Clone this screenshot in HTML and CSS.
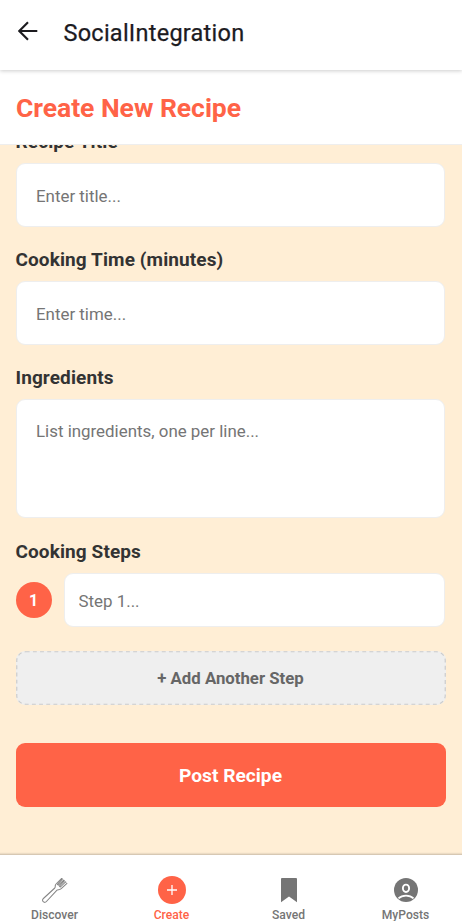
FILE: index.html
```html
<!DOCTYPE html>
<html lang="en">
<head>
<meta charset="utf-8">
<title>SocialIntegration</title>
<link rel="stylesheet" href="styles.css">
</head>
<body>
<div class="app">
  <header class="appbar">
    <svg class="back" viewBox="0 0 20 20" aria-hidden="true"><path d="M19.300 10H1.800M10 1.200 1.300 10l8.700 8.800"/></svg>
    <span class="appbar-title">SocialIntegration</span>
  </header>
  <div class="page-head"><h1>Create New Recipe</h1></div>
  <main class="content">
    <form class="form">
      <label class="label first" for="title">Recipe Title</label>
      <input class="field" id="title" placeholder="Enter title...">
      <label class="label" for="time">Cooking Time (minutes)</label>
      <input class="field" id="time" placeholder="Enter time...">
      <label class="label" for="ingredients">Ingredients</label>
      <textarea class="field area" id="ingredients" placeholder="List ingredients, one per line..."></textarea>
      <label class="label steps-label" for="step">Cooking Steps</label>
      <div class="step">
        <span class="step-number">1</span>
        <input class="field step-field" id="step" placeholder="Step 1...">
      </div>
      <button class="add" type="button">
        <svg class="dashes" aria-hidden="true"><rect class="dash-rect" x="0.75" y="0.75" rx="9"/></svg>
        <span>+ Add Another Step</span>
      </button>
      <button class="post" type="button">Post Recipe</button>
    </form>
  </main>
  <nav class="tabs">
    <a class="tab">
      <svg class="icon" viewBox="0 0 28 28"><path class="line" d="M2.200 25.700c-1-1-.8-2.300.2-3.200L13.800 12c.7-.7.3-1.500.5-2.500.2-.8.600-1.400 1.200-2l5.200-5.100M2.200 25.700c1 1 2.300.8 3.200-.2L16 14.100c.7-.7 1.500-.3 2.500-.5.8-.2 1.400-.6 2-1.200l5.700-5.300M20.700 2.400l.7.700-5 5.200 1 .9 5.300-5.100.7.700-5 5.300 1 .9 5.200-5.100.6.600"/></svg>
      <span>Discover</span>
    </a>
    <a class="tab active">
      <svg class="icon" viewBox="0 0 28 28"><circle cx="14" cy="14" r="14" fill="#ff6347"/><path d="M9 14h10M14 9v10" stroke="#fff" stroke-width="1.300"/></svg>
      <span>Create</span>
    </a>
    <a class="tab">
      <svg class="icon" viewBox="0 0 28 28"><path d="M7.200 2h13.600c.8 0 1.200.4 1.200 1.200v23L14 20.500 6 26.200v-23C6 2.400 6.400 2 7.200 2z" fill="#757575"/></svg>
      <span>Saved</span>
    </a>
    <a class="tab">
      <svg class="icon" viewBox="0 0 28 28"><circle cx="14" cy="14" r="12" fill="#757575"/><ellipse cx="14" cy="12.300" rx="3.100" ry="3.700" fill="none" stroke="#fff" stroke-width="1.900"/><path d="M6.500 22.300c3.800-3.700 11.200-3.700 15 0" fill="none" stroke="#fff" stroke-width="1.800"/></svg>
      <span>MyPosts</span>
    </a>
  </nav>
</div>
</body>
</html>
```
FILE: styles.css
```css
* { box-sizing: border-box; }
body { margin: 0; font-family: Roboto, sans-serif; }
.app { display: flex; flex-direction: column; height: 921px; width: 462px; overflow: hidden; background: #ffeed5; }
.appbar { position: relative; z-index: 1; flex: none; height: 70px; display: flex; align-items: center; gap: 26px; padding: 0 17.500px 4px; background: #fff; box-shadow: 0 1px 4px rgba(0,0,0,.2); }
.back { width: 20px; height: 20px; margin-top: -4px; fill: none; stroke: #1c1b1f; stroke-width: 2.100; }
.appbar-title { font-size: 23.500px; font-weight: 400; letter-spacing: .25px; color: #1c1b1f; line-height: 28px; -webkit-text-stroke: .25px #1c1b1f; }
.page-head { flex: none; height: 75px; padding: 22px 16px 0; background: #fff; border-bottom: 1px solid #eee; }
h1 { margin: 0; font-size: 26.500px; line-height: 32px; font-weight: 700; letter-spacing: -.03px; color: #ff6347; }
.content { flex: 1; min-height: 0; overflow: hidden; }
.form { display: flex; flex-direction: column; padding: 0 17px 0 15.500px; margin-top: -15px; }
.label { font-size: 19px; font-weight: 700; letter-spacing: .1px; line-height: 24px; color: #333; margin: 21px 0 9px; }
.label.first { margin-top: 0; }
.steps-label { margin-top: 22px; }
.field { display: block; width: 100%; height: 64px; padding: 2px 19.500px 0; margin: 0; font: 400 16.900px Roboto, sans-serif; color: #333; background: #fff; border: 1px solid #eee; border-radius: 9px; outline: 0; resize: none; }
.field::placeholder { color: #757575; }
.area { height: 119px; padding-top: 21px; }
.step { display: flex; align-items: center; gap: 12px; }
.step-number { flex: none; width: 36px; height: 36px; border-radius: 50%; background: #ff6347; color: #fff; font-size: 16px; font-weight: 700; line-height: 37px; text-align: center; }
.step-field { flex: 1; height: 54px; padding: 1px 14px 0; }
button { font-family: Roboto, sans-serif; border: 0; padding: 0; font-weight: 700; }
.add { position: relative; height: 54px; margin: 24px -.500px 0 0; border-radius: 9px; background: #efefef; color: #666; font-size: 16.800px; }
.dashes { position: absolute; inset: 0; width: 100%; height: 100%; }
.dash-rect { width: calc(100% - 1.500px); height: calc(100% - 1.500px); fill: none; stroke: #ccc; stroke-width: 1.200; stroke-dasharray: 3.900 3.260; }
.post { height: 64px; margin: 38px -.500px 0 0; padding-top: 1px; border-radius: 9px; background: #ff6347; color: #fff; font-size: 19.200px; }
.tabs { position: relative; flex: none; height: 66px; display: grid; grid-template-columns: repeat(4, 117px); margin-left: -4px; background: #fff; box-shadow: 0 -1px 2px rgba(0,0,0,.23); width: 468px; }
.tab { display: flex; flex-direction: column; align-items: center; padding-top: 21px; color: #757575; font-size: 12.100px; font-weight: 500; line-height: 14px; gap: 4px; }
.tab.active { color: #ff6347; }
.icon { width: 28px; height: 28px; flex: none; }
.line { fill: none; stroke: #858585; stroke-width: 1.050; stroke-linejoin: round; }
```
